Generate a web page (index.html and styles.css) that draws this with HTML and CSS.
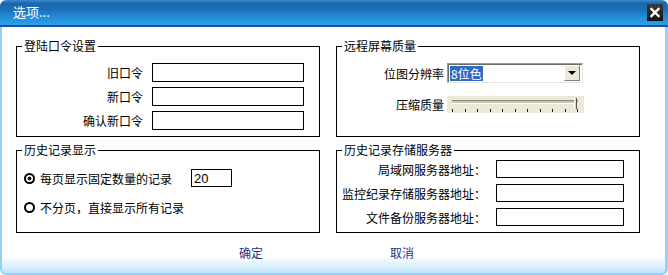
FILE: index.html
```html
<!DOCTYPE html>
<html lang="zh-CN">

<head>
    <meta charset="UTF-8">
    <meta name="viewport" content="width=device-width, initial-scale=1.0">
    <title>选项...</title>
    <link rel="stylesheet" href="styles.css">
</head>

<body>
    <div class="window">
        <div class="titlebar">
            <span class="title">选项...</span>
            <button class="close" aria-label="关闭">
                <svg width="16" height="17" viewBox="0 0 16 17">
                    <path d="M4.5 5 L11.5 12 M11.5 5 L4.5 12" stroke="#fff" stroke-width="2.4" stroke-linecap="square" />
                </svg>
            </button>
        </div>

        <div class="content">
            <div class="groups">
                <fieldset class="group">
                    <legend>登陆口令设置</legend>
                    <div class="form-grid pwd">
                        <label>旧口令</label><input type="password">
                        <label>新口令</label><input type="password">
                        <label>确认新口令</label><input type="password">
                    </div>
                </fieldset>

                <fieldset class="group">
                    <legend>远程屏幕质量</legend>
                    <div class="form-grid quality">
                        <label>位图分辨率</label>
                        <div class="combo">
                            <span class="combo-value">8位色</span>
                            <span class="combo-btn"></span>
                        </div>
                        <label>压缩质量</label>
                        <div class="slider">
                            <div class="track"><span class="thumb"></span></div>
                            <div class="ticks">
                                <i></i><i></i><i></i><i></i><i></i><i></i><i></i><i></i><i></i><i></i><i></i>
                            </div>
                        </div>
                    </div>
                </fieldset>

                <fieldset class="group">
                    <legend>历史记录显示</legend>
                    <div class="radios">
                        <div class="radio-row">
                            <label><input type="radio" name="page" class="radio" checked>每页显示固定数量的记录</label>
                            <input type="text" class="count" value="20">
                        </div>
                        <div class="radio-row">
                            <label><input type="radio" name="page" class="radio">不分页，直接显示所有记录</label>
                        </div>
                    </div>
                </fieldset>

                <fieldset class="group">
                    <legend>历史记录存储服务器</legend>
                    <div class="form-grid servers">
                        <label>局域网服务器地址：</label><input type="text">
                        <label>监控纪录存储服务器地址：</label><input type="text">
                        <label>文件备份服务器地址：</label><input type="text">
                    </div>
                </fieldset>
            </div>

            <div class="actions">
                <button class="link-btn">确定</button>
                <button class="link-btn">取消</button>
            </div>
        </div>
    </div>
</body>

</html>
```

FILE: styles.css
```css
* {
    margin: 0;
    padding: 0;
    box-sizing: border-box
}

:root {
    --frame: #93d1f6;
    --title-line: #1d4fa3;
    --face: #ece9d8;
    --link: #1a3589
}

body {
    width: 668px;
    height: 275px;
    background: #fff;
    font-family: "Noto Sans CJK SC", "Liberation Sans", sans-serif;
    font-size: 12px;
    color: #000;
    overflow: hidden
}

.window {
    height: 100%;
    display: flex;
    flex-direction: column
}

.titlebar {
    height: 27px;
    display: flex;
    align-items: center;
    justify-content: space-between;
    padding: 0 5px 1px 13px;
    border-radius: 6px 6px 0 0;
    border-bottom: 2px solid var(--title-line);
    background: linear-gradient(#3d8dd3 0, #1a69ae 3px, #1b6db3 9px, #238ad4 16px, #2aa1e8 25px)
}

.title {
    color: #fff;
    font-size: 13px;
    line-height: 16px
}

.close {
    width: 16px;
    height: 17px;
    border: 0;
    background: linear-gradient(#3b3b3b, #141414);
    display: flex
}

.content {
    flex: 1;
    border: solid var(--frame);
    border-width: 0 3px 2px 2px;
    border-radius: 0 0 6px 6px;
    padding: 11px 0 0 14px;
    background: linear-gradient(#fff 229px, #c3e4fb)
}

.groups {
    display: grid;
    grid-template-columns: 304px 304px;
    column-gap: 16px;
    row-gap: 5px
}

.group {
    border: 1px solid #000;
    min-width: 0
}

.group legend {
    margin-left: 5px;
    padding: 0 2px;
    line-height: 16px
}

.form-grid {
    display: grid;
    align-items: center;
    justify-items: end
}

.form-grid > *:not(label) {
    justify-self: start
}

input[type="text"],
input[type="password"] {
    border: 1px solid #000;
    background: #fff;
    font-family: "Liberation Sans", sans-serif;
    font-size: 13px;
    padding: 0 2px;
    outline: none
}

.pwd {
    grid-template-columns: 1fr 152px;
    column-gap: 9px;
    row-gap: 5px;
    padding: 9px 15px 6px 0
}

.pwd input {
    width: 152px;
    height: 19px
}

.quality {
    grid-template-columns: 1fr 137px;
    column-gap: 3px;
    row-gap: 13px;
    padding: 9px 55px 0 0
}

.combo {
    width: 136px;
    height: 20px;
    display: flex;
    align-items: center;
    justify-content: space-between;
    padding: 0 2px 0 2px;
    border: 1px solid;
    border-color: #9c9a8f #e8e6dc #e8e6dc #9c9a8f;
    box-shadow: inset 1px 1px #6f6d63;
    background: #fff
}

.combo-value {
    background: #316ac5;
    color: #fff;
    line-height: 15px;
    padding: 0 1px
}

.combo-btn {
    width: 16px;
    height: 16px;
    background: var(--face);
    border: 1px solid;
    border-color: #fff #808080 #808080 #fff;
    display: flex;
    align-items: center;
    justify-content: center
}

.combo-btn::after {
    content: "";
    border: 4px solid transparent;
    border-top: 4px solid #000;
    border-bottom: 0
}

.slider {
    width: 137px;
    height: 17px;
    background: var(--face);
    padding: 4px 6px 0 5px
}

.track {
    position: relative;
    height: 4px;
    border-top: 1px solid #8a877a;
    border-bottom: 1px solid #fff;
    background: #c9c6b6
}

.thumb {
    position: absolute;
    right: 1px;
    top: -3px;
    width: 3px;
    height: 11px;
    border-left: 1px solid #fff;
    border-right: 1px solid #4f4d45;
    background: #d8d5c6
}

.ticks {
    display: flex;
    justify-content: space-between;
    margin-top: 5px
}

.ticks i {
    width: 1px;
    height: 3px;
    background: #222
}

.radios {
    display: flex;
    flex-direction: column;
    gap: 11px;
    padding: 11px 0 16px 7px
}

.radio-row {
    display: flex;
    align-items: center;
    gap: 19px;
    height: 18px
}

.radio-row label {
    display: flex;
    align-items: center;
    gap: 5px
}

.radio {
    appearance: none;
    width: 11px;
    height: 11px;
    border: 2px solid #000;
    border-radius: 50%;
    background: #fff
}

.radio:checked {
    background: radial-gradient(circle, #000 0 1.8px, #fff 2.2px)
}

.count {
    width: 41px;
    height: 18px
}

.servers {
    grid-template-columns: 1fr 128px;
    column-gap: 10px;
    row-gap: 6px;
    padding: 2px 15px 6px 0
}

.servers input {
    width: 128px;
    height: 18px
}

.actions {
    display: flex;
    gap: 127px;
    padding: 12px 0 0 223px
}

.link-btn {
    border: 0;
    background: none;
    font: inherit;
    line-height: 16px;
    color: var(--link);
    cursor: pointer
}
```
